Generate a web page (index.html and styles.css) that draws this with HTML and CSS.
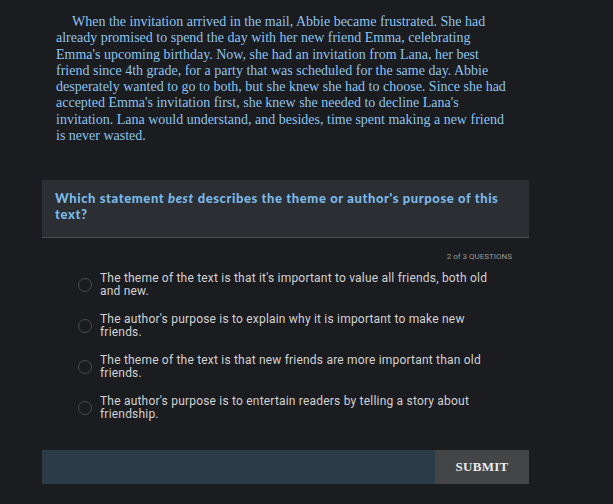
FILE: index.html
```html
<!DOCTYPE html>
<html>
<head>
<meta charset="utf-8">
<link rel="stylesheet" href="styles.css">
</head>
<body>
<main class="page">
  <p class="passage">When the invitation arrived in the mail, Abbie became frustrated. She had already promised to spend the day with her new friend Emma, celebrating Emma's upcoming birthday. Now, she had an invitation from Lana, her best friend since 4th grade, for a party that was scheduled for the same day. Abbie desperately wanted to go to both, but she knew she had to choose. Since she had accepted Emma's invitation first, she knew she needed to decline Lana's invitation. Lana would understand, and besides, time spent making a new friend is never wasted.</p>
  <div class="question">Which statement <em>best</em> describes the theme or author's purpose of this text?</div>
  <div class="counter">2 of 3 QUESTIONS</div>
  <ul class="options">
    <li class="option"><span class="radio"></span><span class="label">The theme of the text is that it's important to value all friends, both old and new.</span></li>
    <li class="option"><span class="radio"></span><span class="label">The author's purpose is to explain why it is important to make new friends.</span></li>
    <li class="option"><span class="radio"></span><span class="label">The theme of the text is that new friends are more important than old friends.</span></li>
    <li class="option"><span class="radio"></span><span class="label">The author's purpose is to entertain readers by telling a story about friendship.</span></li>
  </ul>
  <div class="submit-bar"><div class="bar-fill"></div><button class="submit">SUBMIT</button></div>
</main>
</body>
</html>
```
FILE: styles.css
```css
html, body {
  margin: 0;
  padding: 0;
  background: #1b1c1f;
}
.page {
  width: 487px;
  margin-left: 42px;
  display: flex;
  flex-direction: column;
}
.passage {
  margin: 0;
  padding: 14px 19px 0 14px;
  height: 180px;
  box-sizing: border-box;
  font-family: "Liberation Serif", serif;
  font-size: 14px;
  line-height: 16.3px;
  color: #8dc3ee;
  text-indent: 16px;
}
.question {
  background: #2b2e32;
  border-bottom: 1px solid #4b4e52;
  padding: 10px 13px 15px 13px;
  font-family: Lato, sans-serif;
  font-weight: 900;
  font-size: 13px;
  letter-spacing: 0.6px;
  line-height: 16px;
  color: #7ab9e8;
}
.question em {
  font-style: italic;
}
.counter {
  text-align: right;
  padding: 14px 17px 0 0;
  font-family: Roboto, sans-serif;
  font-size: 8px;
  line-height: 10px;
  color: #9a9a9a;
}
.options {
  list-style: none;
  margin: 0;
  padding: 10px 0 0 36px;
  display: flex;
  flex-direction: column;
  gap: 15px;
}
.option {
  display: flex;
  align-items: center;
  gap: 8px;
  height: 26px;
}
.radio {
  flex: none;
  width: 12px;
  height: 12px;
  border: 1.5px solid #4a4b4e;
  border-radius: 50%;
}
.label {
  width: 400px;
  font-family: Roboto, sans-serif;
  font-size: 12px;
  letter-spacing: 0.2px;
  line-height: 13px;
  color: #d2d2d2;
}
.submit-bar {
  margin-top: 29px;
  display: flex;
  height: 34px;
}
.bar-fill {
  flex: 1;
  background: #2c3b48;
}
.submit {
  width: 94px;
  border: 0;
  background: #434546;
  color: #ececec;
  font-family: "Liberation Serif", serif;
  font-weight: bold;
  font-size: 13px;
  letter-spacing: 0.3px;
  padding: 0;
}
```
